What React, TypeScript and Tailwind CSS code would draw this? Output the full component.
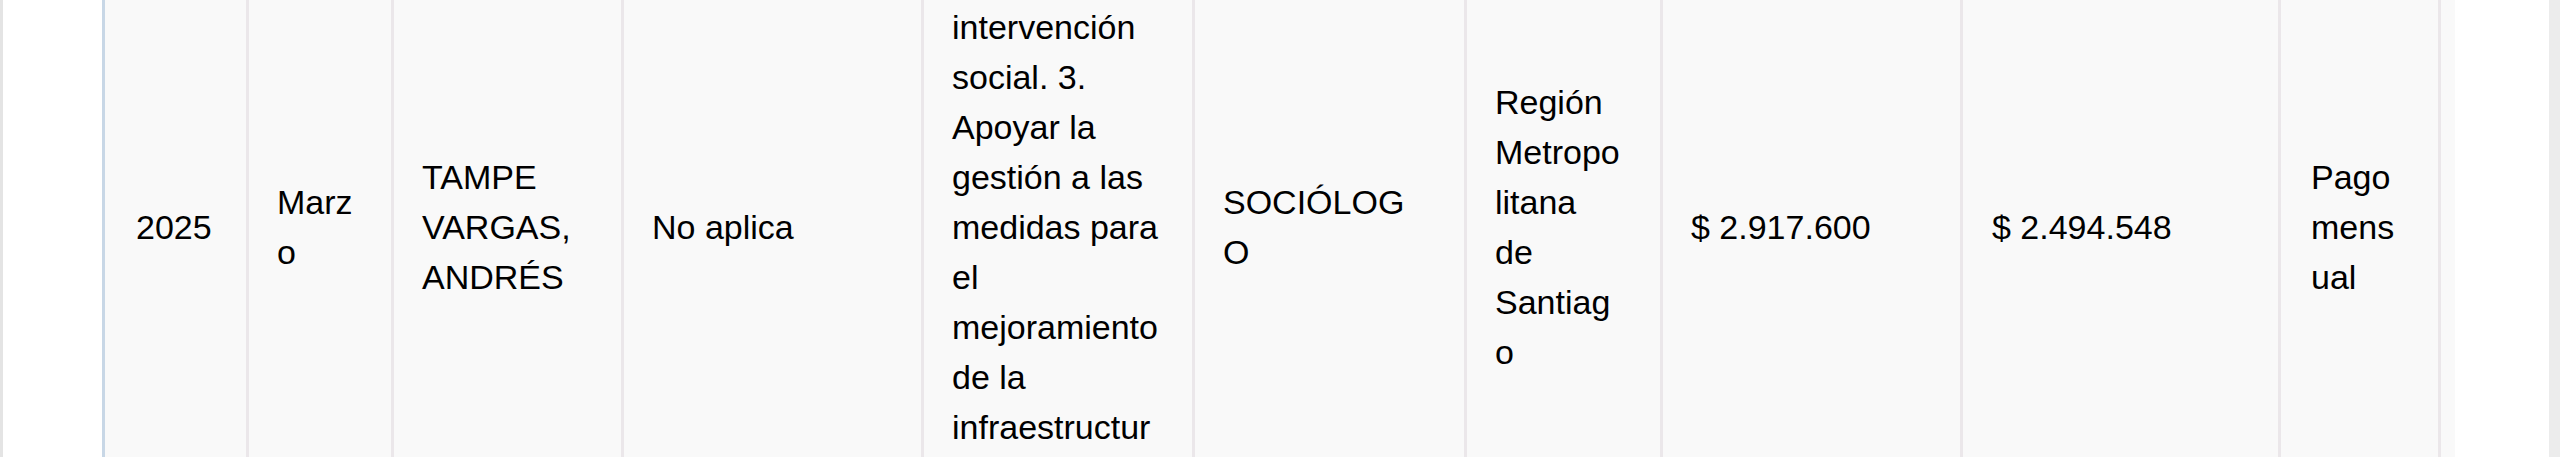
const rows: { w: string; pl: string; lines: string[] }[] = [
  { w: "w-[144px]", pl: "pl-[31px]", lines: ["2025"] },
  { w: "w-[145px]", pl: "pl-[28px]", lines: ["Marz", "o"] },
  { w: "w-[230px]", pl: "pl-[28px]", lines: ["TAMPE", "VARGAS,", "ANDRÉS"] },
  { w: "w-[300px]", pl: "pl-[28px]", lines: ["No aplica"] },
  {
    w: "w-[271px]",
    pl: "pl-[28px]",
    lines: [
      "de las",
      "estrategias de",
      "intervención",
      "social. 3.",
      "Apoyar la",
      "gestión a las",
      "medidas para",
      "el",
      "mejoramiento",
      "de la",
      "infraestructur",
      "a.",
      "",
    ],
  },
  { w: "w-[272px]", pl: "pl-[28px]", lines: ["SOCIÓLOG", "O"] },
  { w: "w-[196px]", pl: "pl-[28px]", lines: ["Región", "Metropo", "litana", "de", "Santiag", "o"] },
  { w: "w-[300px]", pl: "pl-[28px]", lines: ["$ 2.917.600"] },
  { w: "w-[318px]", pl: "pl-[29px]", lines: ["$ 2.494.548"] },
  { w: "w-[160px]", pl: "pl-[30px]", lines: ["Pago", "mens", "ual"] },
];

export default function App() {
  return (
    <div className="flex h-[457px] w-[2560px] overflow-hidden bg-white font-['Liberation_Sans',Arial,sans-serif] text-[34px] leading-[50px] text-black">
      <div className="w-[3px] shrink-0 bg-[#e4e4e4]" />
      <div className="w-[99px] shrink-0 bg-white" />
      <div className="w-[3px] shrink-0 bg-[#c8d7e6]" />

      {rows.map((c, i) => (
        <div
          key={i}
          className={`${c.w} ${c.pl} flex shrink-0 items-center overflow-hidden border-r-[3px] border-[#ebe7ea] bg-[#f9f9f9] pb-[4px]`}
        >
          <div className="flex flex-col whitespace-nowrap">
            {c.lines.map((l, j) => (
              <span key={j} className="block h-[50px]">
                {l}
              </span>
            ))}
          </div>
        </div>
      ))}

      {/* resto de la fila cortada */}
      <div className="w-[14px] shrink-0 bg-[#f9f9f9]" />
      <div className="w-[94px] shrink-0 bg-white" />
      <div className="w-[11px] shrink-0 bg-[#ececec]" />
    </div>
  );
}
